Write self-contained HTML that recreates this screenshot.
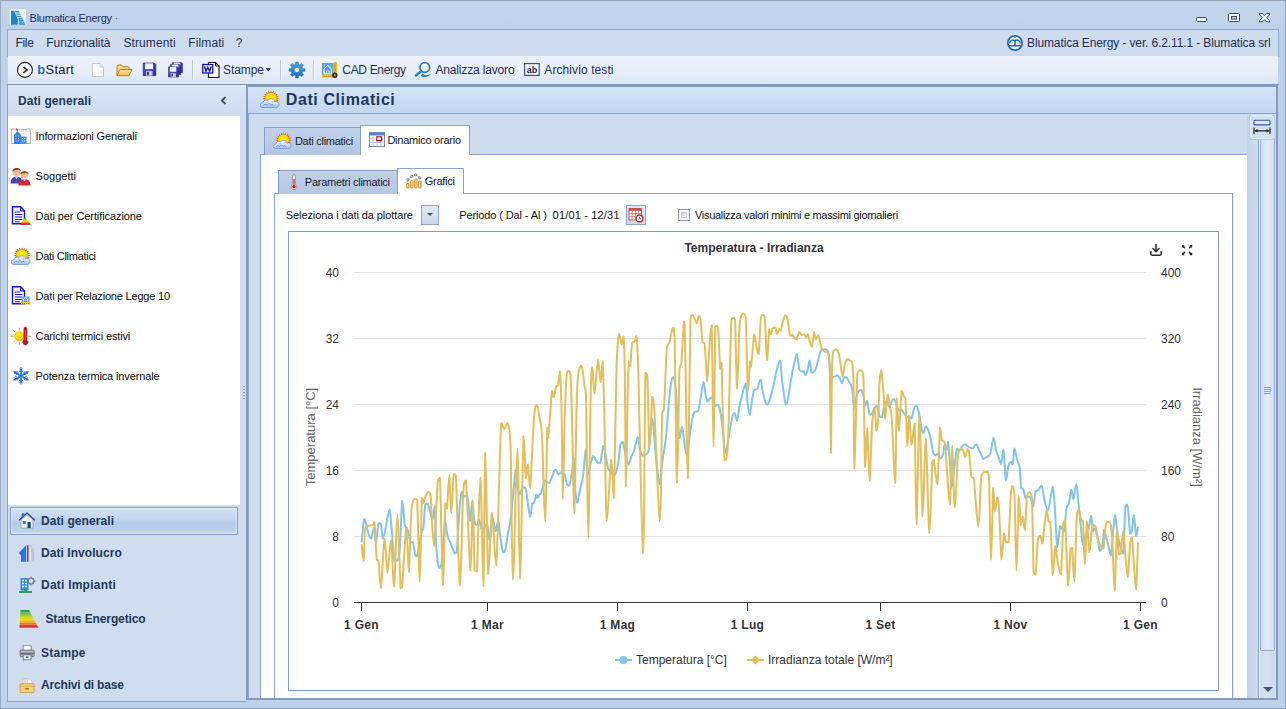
<!DOCTYPE html>
<html lang="it">
<head>
<meta charset="utf-8">
<title>Blumatica Energy</title>
<style>
*{box-sizing:border-box;margin:0;padding:0}
html,body{width:1286px;height:709px;overflow:hidden}
body{position:relative;background:#bfd1e9;font-family:"Liberation Sans",sans-serif;font-size:11px;color:#1e1e1e}
.abs{position:absolute}
.t{position:absolute;white-space:nowrap;line-height:1}
#win{left:0;top:0;width:1286px;height:709px;border:1px solid #98a9c6;border-top-color:#9ba4b3;background:linear-gradient(#c3d4eb,#bfd1e9 30px,#bfd1e9)}
#menubar{left:7px;top:29px;width:1272px;height:28px;border:1px solid #93a8c8;border-bottom:none;background:#cfdcee}
#toolbar{left:8px;top:56px;width:1270px;height:28px;background:linear-gradient(#ebf2fb,#e7eff9 55%,#d8e3f4)}
#tbline{left:7px;top:84px;width:1272px;height:1px;background:#8297ba}
.sep{position:absolute;top:60px;width:2px;height:20px;border-left:1px solid #bccbe2;border-right:1px solid #f6f9fd}
#lp{left:7px;top:85px;width:240px;height:617px;border:1px solid #8ea3c2;border-top:none;border-right:none;background:#d0ddef}
#lphead{left:8px;top:85px;width:238px;height:31px;background:linear-gradient(#dbe6f5,#cfdcee)}
#lplist{left:8px;top:116px;width:232px;height:389px;background:#fff}
#navsel{left:10px;top:507px;width:228px;height:28px;border:1px solid #819cc8;border-radius:1px;background:linear-gradient(#d2e1f4,#c3d6ee 42%,#b3cae8 58%,#c3d6ee);box-shadow:inset 0 0 0 1px rgba(255,255,255,.45)}
#rp{left:246px;top:85px;width:1032px;height:615px;border:2px solid #8299c0;background:#cfdcee;overflow:hidden}
#rphead{left:248px;top:87px;width:1028px;height:27px;background:linear-gradient(#d4e3f7,#c9dbf3 60%,#c4d7f0);border-bottom:1px solid #8ca3c8}
.tab{position:absolute;border:1px solid #829cc6;border-bottom:none;background:linear-gradient(#bfd0e8,#b3c7e2)}
.tabsel{position:absolute;border:1px solid #8aa5cc;border-bottom:none;background:#fff}
.page{position:absolute;border:1px solid #8aa5cc;background:#fff}
.btn{position:absolute;border:1px solid #8ea6c9;background:linear-gradient(#dfe9f6,#c9d8ec)}

</style>
</head>
<body>
<div id="win" class="abs"></div>
<div id="menubar" class="abs"></div>
<div id="toolbar" class="abs"></div>
<div id="tbline" class="abs"></div>
<div class="sep" style="left:192px"></div>
<div class="sep" style="left:280px"></div>
<div class="sep" style="left:313px"></div>
<div id="lp" class="abs"></div>
<div id="lphead" class="abs"></div>
<div id="lplist" class="abs"></div>
<div id="navsel" class="abs"></div>
<div class="abs" style="left:243px;top:386px;width:2px;height:14px;background:repeating-linear-gradient(#7f97bd 0 1px,transparent 1px 3px)"></div>
<div id="rp" class="abs"></div>
<div id="rphead" class="abs"></div>
<div class="abs" style="left:248px;top:114px;width:1px;height:584px;background:#93a9cb"></div>
<!-- outer tab control -->
<div class="abs" style="left:248px;top:115px;width:1028px;height:583px;overflow:hidden">
  <div class="page" style="left:12px;top:39px;width:988px;height:600px"></div>
  <div class="tab" style="left:16px;top:12px;width:97px;height:28px"></div>
  <div class="tabsel" style="left:112px;top:10px;width:110px;height:30px"></div>
  <div class="page" style="left:26px;top:78px;width:959px;height:560px;box-shadow:1px 0 0 #ece9e6"></div>
  <div class="tab" style="left:30px;top:55px;width:120px;height:24px"></div>
  <div class="tabsel" style="left:149px;top:53px;width:67px;height:26px"></div>
  <div class="btn" style="left:173px;top:90px;width:18px;height:20px"></div>
  <div class="abs" style="left:179px;top:98px;width:0;height:0;border:3px solid transparent;border-top:3px solid #555;border-bottom:none"></div>
  <div class="btn" style="left:378px;top:90px;width:20px;height:20px"></div>
  <div class="abs" style="left:430px;top:94px;width:12px;height:12px;border:1px solid #8f99a6;background:#f4f5f7"></div><div class="abs" style="left:433px;top:97px;width:6px;height:6px;border:1px solid #c4c8cf;background:linear-gradient(135deg,#d2d5da,#eef0f2)"></div>
  <div class="abs" style="left:40px;top:116px;width:931px;height:460px;border:1px solid #7f9ccb;background:#fff"></div>
  <!-- scroll strip -->
  <div class="abs" style="left:999px;top:0;width:12px;height:584px;background:linear-gradient(90deg,#c3d3e9,#cfdcee)"></div>
  <div class="abs" style="left:1010px;top:0;width:17px;height:584px;border-left:1px solid #8ba4c9;background:linear-gradient(90deg,#eef3fa 0 1px,#cddbee 1px,#d6e2f2 50%,#cad9ed)"></div>
  <div class="abs" style="left:1012px;top:22px;width:15px;height:514px;border:1px solid #93acd0;border-radius:2px;background:linear-gradient(90deg,#d0deef,#e0eaf6 50%,#d3e0f1)"></div>
  <div class="abs" style="left:1016px;top:272px;width:7px;height:7px;background:repeating-linear-gradient(#8ea6c8 0 1px,transparent 1px 2px)"></div>
  <div class="abs" style="left:1015px;top:572px;width:0;height:0;border:5px solid transparent;border-top:5px solid #4a5478;border-bottom:none"></div>
  <div class="abs" style="left:1002px;top:0px;width:24px;height:24px;border:1px solid #e6eef9;border-radius:3px;background:#d2dff1;box-shadow:0 0 0 1px #b9cae3"></div>
</div>

<svg class="abs" style="left:0;top:0" width="1286" height="709" viewBox="0 0 1286 709" font-family="Liberation Sans, sans-serif"><rect x="354" y="272" width="792" height="1" fill="#e4e4e4"/><rect x="354" y="338" width="792" height="1" fill="#e4e4e4"/><rect x="354" y="404" width="792" height="1" fill="#e4e4e4"/><rect x="354" y="470" width="792" height="1" fill="#e4e4e4"/><rect x="354" y="536" width="792" height="1" fill="#e4e4e4"/><path d="M361.6,542.3C362.0,538.4 363.4,522.0 364.1,518.9C364.8,518.9 365.3,521.3 366.0,523.8C366.7,526.3 367.7,531.2 368.5,533.7C369.3,536.2 370.1,538.6 371.0,538.6C371.9,537.6 373.4,527.5 374.2,527.5C375.0,528.3 375.2,543.6 375.9,543.6C376.6,542.9 377.6,526.6 378.4,523.3C379.2,523.3 380.2,523.3 380.9,523.8C381.6,526.3 382.0,538.0 382.8,538.6C383.6,538.6 384.7,532.4 385.8,527.5C386.9,522.6 388.5,509.5 389.5,509.5C390.5,510.5 391.2,525.1 392.0,533.7C392.8,542.3 393.4,556.6 394.4,560.9C395.4,560.9 397.2,560.9 398.1,559.6C399.1,556.7 399.4,553.5 400.1,543.6C400.8,533.7 401.5,503.5 402.3,500.4C403.1,500.4 404.0,520.4 404.8,525.1C405.6,528.8 406.4,525.9 407.3,528.8C408.2,531.7 409.6,540.0 410.5,542.3C411.4,542.3 412.2,542.3 413.0,542.3C413.8,544.5 414.7,553.0 415.4,555.4C416.1,556.4 416.2,556.4 417.2,556.4C418.2,552.4 420.6,535.8 421.6,531.2C422.6,528.8 422.7,531.2 423.3,528.8C423.9,524.3 424.6,508.3 425.3,504.1C426.1,503.6 427.0,503.6 427.8,503.6C428.6,505.0 429.4,510.2 430.2,512.7C431.0,515.2 431.9,518.9 432.7,518.9C433.4,517.9 434.1,506.5 434.7,506.5C435.3,511.4 435.7,538.3 436.4,548.5C437.1,558.7 438.1,565.1 438.9,567.8C439.7,567.8 440.4,567.8 441.4,564.6C442.4,556.9 444.1,526.1 445.1,521.4C446.1,521.4 446.5,532.3 447.5,536.2C448.5,540.1 450.0,541.9 451.2,544.8C452.4,547.7 454.0,552.3 454.9,553.5C455.8,553.5 455.9,553.5 456.7,552.2C457.5,544.0 459.0,514.2 459.9,504.1C460.8,494.0 461.2,492.9 461.9,491.7C462.6,491.7 463.2,496.1 464.1,496.7C465.0,496.7 466.3,495.4 467.3,495.4C468.3,499.4 469.4,519.9 470.2,520.9C471.0,520.9 471.4,501.6 472.2,501.6C472.9,502.0 473.9,519.4 474.7,523.3C475.5,525.1 476.5,525.1 477.2,525.1C477.9,524.6 478.4,520.1 479.1,520.1C479.8,520.7 480.7,527.6 481.6,528.8C482.5,528.8 483.7,528.3 484.6,527.5C485.5,526.7 486.1,523.8 487.0,523.8C487.9,526.1 488.9,541.1 489.8,541.1C490.7,540.1 491.5,519.4 492.5,517.7C493.5,517.7 494.8,530.7 495.7,531.2C496.6,531.2 497.3,520.9 498.1,520.9C498.9,522.1 499.8,533.4 500.6,538.6C501.4,543.8 502.4,550.2 503.1,552.2C503.9,552.2 504.3,552.2 505.1,550.5C505.9,547.4 507.0,539.4 508.0,533.7C509.0,528.0 510.0,524.8 511.0,516.4C512.0,508.0 513.4,490.9 514.2,483.1C515.0,475.3 515.1,469.5 515.9,469.5C516.7,471.4 518.0,491.7 519.1,494.7C520.2,494.7 521.7,488.3 522.8,487.3C523.9,487.3 524.9,487.3 525.8,488.8C526.7,492.0 527.6,501.8 528.3,506.5C529.0,511.2 529.6,516.9 530.2,516.9C530.9,516.4 531.6,506.0 532.2,503.6C532.8,502.8 533.3,503.6 534.0,502.8C534.7,501.3 535.8,495.5 536.4,494.7C537.0,494.7 537.2,497.9 537.7,497.9C538.2,497.9 538.8,495.7 539.4,494.7C540.0,493.7 540.4,494.0 541.4,491.7C542.4,489.4 544.1,482.2 545.1,480.6C546.1,480.6 546.8,481.9 547.5,482.3C548.2,482.7 548.7,483.1 549.5,483.1C550.3,482.0 551.5,478.0 552.5,475.7C553.5,473.4 554.4,469.7 555.4,469.5C556.4,469.5 557.6,473.9 558.6,474.4C559.6,474.4 560.2,472.6 561.1,472.5C562.0,472.5 563.3,472.5 564.3,474.0C565.3,476.1 566.5,482.9 567.3,484.8C568.1,485.6 568.5,485.6 569.3,485.6C570.1,483.2 571.5,475.4 572.2,470.7C572.9,466.0 573.0,457.2 573.5,457.2C574.0,460.1 574.6,480.4 575.2,488.0C575.8,495.6 576.5,502.2 577.2,502.8C577.9,502.8 578.6,496.4 579.6,491.7C580.6,487.0 582.3,481.5 583.3,474.4C584.3,467.3 585.0,449.3 585.8,449.3C586.5,449.3 587.0,472.1 587.8,474.4C588.6,474.4 589.8,466.4 590.7,463.3C591.6,460.2 592.4,456.5 593.2,455.9C594.0,455.9 594.9,458.4 595.7,459.6C596.5,460.8 597.3,462.9 598.1,463.3C598.9,463.3 599.8,463.3 600.6,462.1C601.4,459.2 602.3,447.2 603.1,446.0C603.9,446.0 604.8,451.0 605.6,454.7C606.4,458.4 607.2,465.6 608.0,468.3C608.8,470.7 609.5,469.5 610.5,470.7C611.5,471.9 613.0,475.7 614.2,475.7C615.4,474.7 616.9,469.8 617.9,464.6C618.9,459.5 619.6,448.6 620.4,444.8C621.2,441.9 622.0,441.9 622.8,441.9C623.6,443.3 624.3,449.7 625.3,453.5C626.2,457.3 627.5,464.2 628.5,464.6C629.5,464.6 630.6,458.2 631.5,455.9C632.4,453.6 633.0,454.2 634.0,451.0C635.0,447.8 636.7,437.1 637.7,436.9C638.7,436.9 639.3,446.7 640.1,449.8C640.9,452.9 641.5,454.7 642.5,455.4C643.5,455.4 645.2,455.0 646.2,454.2C647.2,453.4 647.7,454.2 648.6,450.5C649.5,444.5 651.1,422.1 651.9,418.4C652.7,418.4 652.9,421.7 653.6,428.3C654.3,434.9 655.0,448.6 656.0,457.9C657.0,467.2 658.8,483.5 659.8,484.3C660.8,484.3 661.2,470.5 662.2,462.8C663.2,455.1 664.9,447.2 665.9,438.1C666.9,429.1 667.6,417.6 668.4,408.5C669.2,399.4 670.1,389.1 670.9,383.8C671.7,378.5 672.5,376.9 673.3,376.9C674.1,377.7 675.1,381.9 675.8,388.8C676.5,395.7 676.9,410.2 677.5,418.4C678.1,426.6 678.8,436.7 679.5,438.1C680.2,438.1 681.2,427.0 682.0,427.0C682.8,427.8 683.6,438.4 684.4,443.1C685.2,447.8 686.1,455.4 686.9,455.4C687.7,454.6 688.6,443.9 689.4,438.1C690.2,432.4 691.1,425.2 691.9,420.9C692.7,416.6 693.3,413.8 694.3,412.2C695.3,411.0 697.0,412.2 698.0,411.0C699.0,408.7 699.6,403.5 700.5,398.6C701.4,393.8 702.7,382.7 703.5,381.9C704.3,381.9 704.8,390.4 705.4,393.7C706.0,397.0 706.6,400.8 707.4,401.6C708.1,401.6 709.1,399.3 709.9,398.6C710.7,397.9 711.5,397.4 712.3,397.4C713.1,398.6 713.9,404.8 714.8,406.0C715.7,406.0 716.9,404.8 717.8,404.8C718.7,405.6 719.4,407.1 720.2,411.0C721.0,414.9 721.9,421.3 722.7,428.3C723.5,435.3 724.4,450.5 725.2,453.0C726.0,453.0 726.9,447.2 727.7,443.1C728.5,439.0 729.3,432.8 730.1,428.3C730.9,423.8 731.9,418.4 732.6,415.9C733.4,413.3 733.9,413.0 734.6,413.0C735.3,413.8 736.2,420.9 737.0,420.9C737.8,419.7 738.6,410.5 739.5,406.0C740.4,401.5 741.5,397.4 742.5,393.7C743.5,390.0 744.8,383.8 745.7,383.8C746.6,385.9 747.2,400.9 747.9,406.0C748.6,411.1 749.2,414.7 749.9,414.7C750.6,413.5 751.6,402.7 752.3,398.6C753.0,394.5 753.5,391.6 754.3,390.0C755.1,388.8 756.3,390.0 757.3,388.8C758.3,387.0 759.6,379.4 760.5,379.4C761.4,379.8 761.9,387.6 762.7,391.2C763.5,394.8 764.5,398.8 765.2,401.1C766.0,403.4 766.5,404.8 767.2,404.8C767.9,404.6 768.6,403.0 769.6,399.9C770.6,396.8 772.1,391.4 773.3,386.3C774.5,381.2 775.9,373.3 777.0,369.0C778.1,364.7 779.1,360.4 780.0,360.4C780.9,362.9 781.5,376.4 782.5,383.8C783.5,391.2 784.8,402.3 785.7,404.8C786.6,404.8 787.2,402.9 788.1,398.6C789.0,394.3 790.1,384.9 791.1,378.9C792.1,372.9 793.3,366.9 794.3,362.8C795.2,358.7 796.0,354.2 796.8,354.2C797.6,355.2 798.5,366.1 799.3,369.0C800.1,371.5 801.0,371.2 801.7,371.5C802.4,371.5 802.9,371.0 803.5,371.0C804.1,371.6 804.7,375.2 805.4,375.2C806.1,374.9 807.2,371.5 807.9,369.0C808.6,366.5 809.0,360.4 809.6,360.4C810.2,361.0 810.9,370.8 811.6,372.7C812.4,372.7 813.3,372.5 814.1,371.5C814.9,370.5 815.7,369.0 816.5,366.5C817.3,364.0 818.2,359.4 819.0,356.7C819.8,354.0 820.0,351.7 821.0,350.5C822.0,349.3 823.5,349.3 824.7,349.3C825.9,349.5 827.3,349.3 828.1,351.7C828.9,354.2 829.1,360.2 829.6,364.1C830.1,368.0 830.2,373.1 830.9,375.2C831.6,376.9 832.7,376.9 833.8,376.9C834.9,376.9 836.5,375.2 837.5,375.2C838.5,375.5 839.2,377.5 840.0,378.9C840.8,380.2 841.3,383.3 842.0,383.3C842.7,383.0 843.6,377.8 844.4,376.9C845.2,376.9 846.1,376.9 846.9,377.7C847.7,378.6 848.7,381.4 849.4,382.6C850.1,383.8 850.5,383.2 851.1,385.1C851.7,387.0 852.3,389.8 852.8,393.7C853.3,397.6 853.8,407.7 854.3,408.5C854.8,408.5 855.3,401.5 856.0,398.6C856.7,395.7 857.7,392.6 858.5,391.2C859.3,390.0 860.2,390.0 861.0,390.0C861.8,390.8 862.8,393.5 863.5,396.2C864.2,398.9 864.6,405.2 865.2,406.0C865.8,406.0 866.5,401.1 867.2,401.1C867.9,402.6 868.8,412.6 869.6,414.7C870.4,414.7 871.3,414.6 872.1,413.5C872.9,412.4 873.8,409.2 874.6,408.0C875.4,406.8 876.2,406.0 877.0,406.0C877.8,407.3 878.7,414.0 879.5,415.9C880.3,417.2 881.2,417.2 882.0,417.2C882.8,415.4 883.6,407.5 884.4,404.8C885.2,402.1 886.1,401.1 886.9,401.1C887.7,401.5 888.6,407.3 889.4,407.3C890.2,407.3 891.1,402.5 891.9,401.1C892.7,399.7 893.5,399.1 894.3,399.1C895.1,399.9 896.0,404.0 896.8,406.0C897.6,408.0 898.5,410.4 899.3,411.0C900.1,411.0 900.9,409.8 901.7,409.8C902.5,410.2 903.4,412.3 904.2,413.5C905.0,414.7 905.9,416.7 906.7,417.2C907.5,417.2 908.3,416.4 909.1,416.4C909.9,416.6 910.8,418.4 911.6,418.4C912.4,417.1 913.3,410.6 914.1,408.5C914.9,406.4 915.7,405.6 916.5,405.6C917.3,406.4 918.2,409.7 919.0,413.5C919.8,417.3 920.8,424.9 921.5,428.3C922.2,431.7 922.5,433.6 923.2,433.6C923.9,433.2 924.9,426.8 925.7,426.2C926.5,426.2 927.3,427.8 928.1,429.9C928.9,432.0 929.8,434.9 930.6,438.6C931.4,442.3 932.3,449.4 933.1,452.2C933.9,454.9 934.8,454.8 935.6,455.1C936.4,455.1 937.2,454.1 938.0,454.1C938.8,454.6 939.7,458.2 940.5,458.3C941.3,458.3 942.3,456.9 943.0,454.6C943.7,452.4 944.1,445.6 944.7,444.8C945.3,444.8 946.2,449.7 946.7,449.7C947.2,449.2 947.4,441.8 947.9,441.8C948.4,443.9 949.3,454.3 949.9,462.0C950.5,469.7 950.9,486.8 951.6,488.0C952.3,488.0 953.2,476.0 954.1,469.4C955.0,462.8 956.2,451.6 957.0,448.5C957.8,448.5 958.2,450.9 959.0,450.9C959.8,450.7 960.5,448.3 961.5,447.2C962.5,446.1 964.0,444.3 965.2,444.3C966.4,444.3 967.7,446.5 968.9,447.2C970.1,447.9 971.4,448.5 972.6,448.5C973.8,448.0 975.3,444.3 976.3,444.3C977.3,444.5 978.0,448.0 978.8,449.7C979.6,451.4 980.5,453.0 981.2,454.6C981.9,456.2 982.4,458.7 983.2,459.1C984.0,459.1 985.1,457.8 986.2,457.1C987.3,456.4 988.7,457.1 989.9,455.1C991.1,451.9 992.6,438.7 993.6,437.8C994.6,437.8 995.2,446.5 996.0,449.7C996.8,452.9 997.7,454.7 998.5,457.1C999.3,459.5 1000.2,464.0 1001.0,464.0C1001.8,462.8 1002.7,449.7 1003.5,449.7C1004.3,452.5 1005.1,477.9 1005.9,480.6C1006.7,480.6 1007.6,468.8 1008.4,465.7C1009.2,462.6 1010.2,462.2 1010.9,462.0C1011.6,462.0 1012.0,464.5 1012.6,464.5C1013.2,462.2 1013.9,449.3 1014.6,448.5C1015.3,448.5 1016.2,456.5 1017.0,459.6C1017.8,462.7 1018.8,462.3 1019.5,467.0C1020.2,471.7 1020.6,484.3 1021.2,488.0C1021.8,489.2 1022.5,488.0 1023.2,489.2C1024.0,491.0 1025.0,497.4 1025.7,498.6C1026.5,498.6 1026.9,496.7 1027.7,496.6C1028.5,496.6 1029.7,496.6 1030.6,497.8C1031.5,499.4 1032.3,506.5 1033.1,506.5C1033.9,505.4 1034.8,493.9 1035.6,491.2C1036.4,490.4 1037.0,491.2 1038.0,490.4C1039.0,489.4 1040.7,485.5 1041.7,485.5C1042.7,486.9 1043.2,495.0 1044.2,499.1C1045.2,503.2 1046.9,510.2 1047.9,510.2C1048.9,510.2 1049.6,503.0 1050.4,499.1C1051.2,495.2 1052.1,486.7 1052.8,486.7C1053.5,487.9 1054.0,496.4 1054.8,506.5C1055.5,516.6 1056.4,543.9 1057.3,547.2C1058.2,547.2 1059.1,528.9 1060.2,526.2C1061.3,526.2 1063.0,531.2 1064.0,531.2C1065.0,528.3 1065.6,513.6 1066.4,509.0C1067.2,504.4 1068.1,506.7 1068.9,503.5C1069.7,500.3 1070.7,490.4 1071.4,489.7C1072.1,489.7 1072.5,499.1 1073.3,499.1C1074.1,498.2 1075.5,484.3 1076.3,484.3C1077.1,484.7 1077.6,494.9 1078.3,501.5C1079.0,508.1 1079.7,516.6 1080.5,523.8C1081.3,531.0 1082.0,543.2 1083.0,544.8C1084.0,544.8 1085.3,536.3 1086.2,533.6C1087.1,530.9 1087.8,531.7 1088.6,528.7C1089.4,525.8 1090.4,515.9 1091.1,515.9C1091.8,516.3 1092.2,529.2 1092.8,531.2C1093.4,531.2 1094.0,528.2 1094.8,528.2C1095.5,529.2 1096.5,533.5 1097.3,537.3C1098.1,541.1 1099.0,549.4 1099.8,550.9C1100.6,550.9 1101.5,549.5 1102.2,546.0C1102.9,542.5 1103.6,531.5 1104.2,529.9C1104.8,529.9 1105.2,533.4 1105.9,536.1C1106.6,538.8 1107.6,542.8 1108.4,546.0C1109.2,549.2 1110.1,555.4 1110.9,555.4C1111.7,552.5 1112.6,535.4 1113.3,528.7C1114.0,522.0 1114.5,515.1 1115.1,515.1C1115.7,515.1 1116.3,524.4 1117.0,528.7C1117.7,533.0 1118.0,536.9 1119.0,541.0C1120.0,545.1 1122.2,553.4 1123.2,553.4C1124.2,548.1 1124.6,517.1 1125.2,509.0C1125.8,504.5 1126.4,504.5 1126.9,504.5C1127.4,504.5 1127.6,504.5 1128.1,509.0C1128.6,513.9 1129.5,529.9 1130.1,533.6C1130.7,533.6 1131.3,533.6 1131.9,531.2C1132.5,528.1 1133.1,515.1 1133.8,515.1C1134.5,515.9 1135.6,534.2 1136.3,536.1C1137.0,536.1 1137.7,528.3 1138.0,526.7" fill="none" stroke="#82c4ea" stroke-width="2" stroke-linejoin="round"/><path d="M361.6,544.1C361.9,546.9 362.9,560.9 363.6,560.9C364.3,558.0 364.1,532.8 365.6,526.8C367.1,525.1 371.2,525.9 372.7,525.1C374.2,524.3 373.7,521.9 374.4,521.9C375.1,527.5 376.0,552.3 376.7,558.9C377.4,561.4 377.9,558.9 378.6,561.4C379.3,566.2 379.9,588.0 380.9,588.0C381.9,584.2 383.5,541.1 384.6,538.6C385.7,538.6 386.4,572.5 387.5,572.7C388.6,572.7 389.9,539.9 391.0,539.9C392.1,542.2 392.9,586.8 394.0,586.8C395.1,582.5 396.3,514.4 397.4,514.4C398.5,514.6 399.8,575.8 400.6,588.0C401.4,588.0 401.2,588.0 402.1,587.5C403.1,577.5 405.2,530.9 406.3,528.3C407.4,528.3 407.9,572.0 408.8,572.0C409.7,568.8 410.5,521.2 411.5,509.0C412.5,498.6 413.9,500.0 414.9,498.6C415.8,498.6 416.4,498.6 417.2,500.4C418.0,514.3 418.8,581.9 419.6,581.9C420.4,581.5 421.3,511.0 421.9,497.9C422.5,497.9 422.7,503.3 423.3,503.3C423.9,503.0 424.7,498.1 425.6,496.2C426.5,494.3 427.7,491.9 428.5,491.7C429.3,491.7 429.6,491.7 430.5,494.7C431.4,503.8 432.8,546.0 434.0,546.0C435.2,543.7 436.7,492.4 437.7,481.1C438.7,478.1 439.0,478.1 439.9,478.1C440.8,495.4 442.2,580.9 443.1,585.1C444.0,585.1 444.7,516.1 445.3,503.3C445.9,503.3 446.3,508.5 447.0,508.5C447.7,503.8 448.6,475.2 449.3,475.2C450.0,475.9 450.5,512.7 451.2,512.7C451.9,512.5 452.9,480.2 453.7,474.0C454.5,474.0 454.9,474.0 455.9,475.7C456.9,494.3 458.7,582.4 459.9,585.6C461.1,585.6 462.1,512.2 463.1,494.7C464.1,480.6 464.8,480.6 466.0,480.6C467.2,493.3 469.4,567.5 470.5,570.7C471.6,570.7 472.0,499.9 472.7,499.9C473.4,499.9 474.0,558.8 474.7,570.7C475.4,571.5 475.9,571.5 476.9,571.5C477.8,556.0 479.3,477.7 480.4,477.7C481.5,480.2 482.5,586.3 483.3,586.3C484.1,582.1 484.5,454.7 485.3,452.7C486.1,452.7 487.2,564.4 488.3,574.4C489.4,574.4 490.7,514.2 492.0,512.7C493.3,512.7 494.7,565.3 496.2,565.3C497.7,550.3 499.8,445.7 501.1,423.0C502.5,423.0 503.3,429.2 504.3,429.2C505.3,429.2 506.3,423.0 507.3,423.0C508.3,425.6 509.6,423.0 510.5,444.8C511.4,470.9 511.9,578.8 513.0,579.4C514.1,579.4 516.2,448.6 517.4,448.5C518.5,448.5 518.9,578.9 519.9,578.9C520.9,576.9 522.6,453.0 523.6,436.2C524.6,436.2 525.1,473.4 525.8,478.1C526.5,478.1 527.1,464.6 527.8,464.6C528.5,466.2 529.2,488.0 530.2,488.0C531.2,480.2 532.9,431.9 534.0,418.1C535.1,405.0 536.0,405.0 536.9,405.0C537.8,405.0 538.7,412.6 539.6,418.1C540.5,423.6 541.2,420.7 542.1,437.8C543.0,454.9 544.2,520.9 545.1,520.9C546.0,519.2 546.8,441.4 547.3,427.5C547.8,427.5 547.5,437.8 548.3,437.8C549.1,431.7 551.1,397.7 552.0,390.9C552.9,390.9 553.0,397.1 553.7,397.1C554.4,396.4 555.5,388.6 556.2,386.5C556.9,384.8 557.5,386.5 558.1,384.8C558.7,382.2 559.3,371.2 559.9,371.2C560.5,375.9 561.1,391.8 561.6,413.1C562.1,434.4 562.3,499.1 562.8,499.1C563.3,499.1 564.1,434.0 564.8,413.1C565.5,392.2 566.2,380.7 566.8,373.6C567.4,370.7 567.9,370.7 568.5,370.7C569.1,370.9 569.9,370.7 570.5,374.9C571.1,384.0 571.6,402.4 572.2,425.5C572.8,448.6 573.5,513.5 574.2,513.5C575.0,509.8 576.0,426.6 576.7,403.3C577.4,380.0 577.7,379.9 578.4,373.6C579.1,367.3 580.2,366.3 580.9,365.7C581.6,365.7 582.0,366.5 582.6,369.9C583.2,373.3 584.0,381.7 584.6,386.0C585.2,390.3 585.4,386.0 586.0,395.9C586.6,421.1 587.5,537.4 588.3,537.4C589.1,537.0 590.0,421.7 590.7,393.4C591.4,367.5 591.9,367.5 592.5,367.5C593.1,367.5 593.5,393.4 594.4,393.4C595.3,392.2 597.1,362.0 598.1,360.1C599.1,360.1 599.9,382.1 600.6,382.3C601.4,382.3 602.0,361.3 602.6,361.3C603.2,366.4 603.6,386.5 604.3,413.1C605.0,439.7 605.6,513.1 606.8,520.9C607.9,520.9 610.1,463.4 611.2,459.6C612.4,459.6 612.8,497.9 613.7,497.9C614.6,481.9 615.8,391.1 616.7,363.8C617.6,336.5 618.3,337.3 619.1,334.1C619.9,334.1 620.9,344.1 621.6,344.5C622.4,344.5 623.1,336.6 623.6,336.6C624.1,341.9 624.4,351.1 624.8,376.1C625.2,401.1 625.5,484.7 626.0,486.8C626.5,486.8 627.3,409.4 627.8,388.5C628.3,367.6 628.6,365.0 629.0,361.3C629.4,361.3 629.7,366.2 630.2,366.2C630.7,363.1 631.5,346.9 632.2,342.8C633.0,341.5 634.0,342.6 634.7,341.5C635.4,340.4 635.8,335.9 636.4,335.9C637.0,339.6 637.0,335.9 638.1,363.8C639.2,400.1 641.9,552.0 643.1,553.5C644.3,553.5 644.7,402.2 645.4,372.7C646.1,372.7 646.7,372.7 647.4,376.4C648.1,388.9 648.6,444.6 649.4,448.0C650.2,448.0 651.5,403.3 652.3,396.7C653.1,396.7 653.0,396.7 654.3,408.5C655.5,429.2 658.5,520.1 659.8,520.9C661.1,520.9 661.5,432.2 662.2,413.5C662.9,408.5 663.2,413.5 664.0,408.5C664.8,397.8 665.8,360.4 666.7,349.3C667.6,341.9 668.8,344.8 669.6,341.9C670.4,339.0 671.0,334.4 671.6,332.0C672.2,329.6 672.8,327.5 673.3,327.5C673.8,328.3 674.0,327.5 674.6,336.9C675.2,362.8 676.2,477.2 677.0,482.6C677.8,482.6 678.8,389.2 679.5,369.0C680.2,361.6 680.8,369.0 681.5,361.6C682.2,353.7 683.4,323.7 684.0,321.6C684.6,321.6 684.6,323.1 685.2,349.3C685.8,375.5 686.8,478.6 687.7,478.6C688.6,473.2 689.8,344.5 690.6,317.2C691.4,314.7 691.6,314.7 692.3,314.7C693.0,315.0 694.0,317.7 694.8,319.1C695.5,320.5 696.1,323.3 696.8,323.3C697.5,322.8 698.2,316.5 698.8,315.9C699.4,315.9 699.9,315.9 700.5,319.6C701.1,323.9 701.8,337.9 702.5,341.9C703.2,343.8 703.9,341.9 704.7,343.8C705.5,350.4 706.5,380.1 707.2,381.4C707.9,381.4 708.4,361.0 709.1,351.7C709.8,342.4 710.9,325.3 711.6,325.3C712.4,341.2 713.0,446.5 713.6,446.8C714.2,446.8 714.7,347.2 715.3,327.0C715.9,325.8 716.8,325.8 717.3,325.8C717.8,327.0 718.0,327.2 718.5,334.4C719.0,341.6 719.7,364.3 720.2,369.0C720.7,369.0 721.1,362.8 721.5,362.8C721.9,369.4 722.2,392.2 722.7,408.5C723.2,424.8 723.9,453.8 724.7,460.4C725.5,460.4 726.8,460.4 727.7,448.0C728.6,431.9 729.5,385.5 730.1,364.1C730.7,342.7 730.9,327.3 731.4,319.6C731.9,317.7 732.7,317.7 733.3,317.7C733.9,317.7 734.5,317.7 735.1,319.6C735.7,331.5 736.3,387.6 737.0,388.8C737.7,388.8 738.7,339.4 739.5,327.0C740.3,314.7 741.0,316.9 741.7,314.7C742.4,313.5 743.0,313.5 743.7,313.5C744.4,313.9 745.0,313.5 745.7,317.2C746.4,330.1 747.2,383.8 747.9,391.2C748.6,391.2 749.4,365.7 749.9,361.6C750.4,361.6 750.4,366.5 751.1,366.5C751.8,362.0 753.3,338.1 754.1,334.4C754.9,334.4 755.3,341.0 756.0,344.3C756.7,347.6 757.7,354.2 758.5,354.2C759.3,349.7 760.2,323.8 761.0,317.2C761.8,314.7 762.4,314.7 763.0,314.7C763.6,314.7 764.0,314.7 764.7,317.2C765.4,324.8 766.5,358.3 767.2,360.4C767.9,360.4 768.5,333.8 769.1,329.5C769.7,329.5 770.3,334.4 770.9,334.4C771.5,334.2 771.9,329.4 772.6,328.3C773.3,327.5 774.6,327.5 775.3,327.5C776.0,328.4 776.4,333.8 777.0,334.0C777.6,334.0 778.4,329.6 779.0,329.0C779.6,329.0 780.1,330.7 780.7,330.7C781.3,329.6 782.0,324.7 782.7,322.1C783.5,319.6 784.4,316.0 785.2,315.4C786.0,315.4 786.6,315.4 787.4,318.4C788.2,321.8 789.2,332.9 790.1,335.7C791.0,335.7 791.8,334.9 792.6,334.9C793.4,335.4 794.4,338.1 795.1,338.9C795.8,339.4 796.1,339.4 796.8,339.4C797.5,338.2 798.5,332.8 799.3,332.0C800.1,332.0 800.9,334.5 801.7,334.9C802.5,334.9 803.5,334.4 804.2,334.4C804.9,334.8 805.3,337.4 805.9,337.4C806.5,337.4 807.1,334.4 807.9,334.4C808.6,335.5 809.7,341.7 810.4,343.8C811.1,345.9 811.5,346.8 812.1,346.8C812.7,344.8 813.5,333.2 814.1,332.0C814.7,332.0 815.1,338.9 815.8,339.4C816.5,339.4 817.6,335.2 818.3,335.2C819.0,335.8 819.6,340.7 820.2,343.1C820.9,345.5 821.4,348.4 822.2,349.8C823.0,351.2 824.1,350.9 825.2,351.7C826.3,352.5 828.1,351.7 828.9,354.7C829.7,360.9 829.8,372.4 830.1,388.8C830.4,405.2 830.6,453.0 830.9,453.0C831.2,448.9 831.6,381.2 832.1,364.1C832.6,350.5 833.0,353.0 833.8,350.5C834.6,349.3 836.0,349.3 836.8,349.3C837.6,349.7 838.2,350.5 838.8,353.0C839.4,355.5 839.9,360.2 840.5,364.1C841.1,368.0 841.8,376.4 842.5,376.4C843.2,376.4 844.1,367.0 844.9,364.1C845.7,361.2 846.6,359.7 847.4,359.1C848.2,359.1 849.1,359.8 849.9,360.4C850.7,361.0 851.7,360.4 852.3,362.8C852.9,367.5 853.3,371.1 853.6,388.8C853.9,406.5 853.7,469.0 854.3,469.0C854.9,466.5 856.4,390.5 857.3,374.0C858.2,370.2 859.0,370.6 859.8,370.2C860.6,370.2 861.6,370.2 862.2,371.5C862.8,372.9 863.0,371.5 863.5,378.9C864.0,394.8 864.6,458.8 865.2,467.0C865.8,467.0 866.5,428.3 867.2,428.3C867.9,430.7 868.8,481.1 869.6,481.1C870.4,480.3 871.3,435.4 872.1,423.3C872.9,411.2 873.9,408.5 874.6,408.5C875.3,409.7 875.9,429.1 876.5,430.7C877.1,430.7 877.8,426.2 878.3,418.4C878.8,410.6 879.0,391.8 879.5,383.8C880.0,375.8 880.6,370.2 881.2,370.2C881.8,371.0 882.5,380.8 883.2,388.8C883.9,396.8 884.5,417.4 885.2,418.4C886.0,418.4 886.9,397.0 887.7,394.9C888.5,394.9 889.2,401.7 889.9,406.0C890.6,410.3 891.0,408.0 891.9,420.9C892.8,433.8 894.3,483.1 895.1,483.1C895.9,479.4 896.2,407.3 896.8,398.6C897.4,398.6 898.0,430.7 898.8,430.7C899.6,429.4 900.9,396.4 901.7,390.7C902.5,390.7 903.1,394.9 903.7,396.2C904.3,397.5 904.8,396.2 905.4,398.6C906.0,406.9 906.8,443.1 907.4,446.0C908.0,446.0 908.4,416.1 909.1,415.9C909.8,415.9 910.7,443.6 911.6,444.8C912.5,444.8 913.8,423.3 914.6,423.3C915.4,436.6 915.7,524.5 916.5,524.5C917.3,523.1 918.5,416.5 919.5,415.1C920.5,415.1 921.7,512.5 922.7,516.4C923.7,516.4 924.6,438.6 925.7,438.6C926.8,441.4 928.3,529.0 929.4,532.9C930.5,532.9 931.6,474.2 932.3,462.0C933.0,459.6 933.0,459.6 933.8,459.6C934.6,463.3 936.3,484.3 937.3,484.3C938.3,478.9 939.3,434.9 940.0,427.5C940.7,427.5 940.9,437.3 941.7,439.8C942.5,442.3 943.9,439.8 944.7,442.3C945.5,446.8 945.8,456.6 946.7,467.0C947.6,477.4 949.0,504.5 949.9,504.5C950.8,501.0 951.3,446.0 952.1,446.0C952.9,446.4 953.8,505.3 954.8,507.2C955.8,507.2 956.9,466.7 957.8,457.1C958.7,449.7 959.4,451.0 960.2,449.7C961.0,449.2 961.9,449.2 962.7,449.2C963.5,450.4 964.5,457.1 965.2,457.1C966.0,457.1 966.6,450.0 967.2,449.0C967.8,449.0 968.2,449.0 968.9,450.9C969.6,455.5 970.6,472.4 971.4,476.9C972.2,478.1 972.6,476.9 973.8,478.1C974.9,486.5 977.1,527.0 978.3,527.0C979.5,526.8 980.1,486.1 981.2,476.9C982.3,471.9 983.8,472.7 984.9,471.9C986.0,471.9 987.2,471.9 987.9,471.9C988.6,473.5 988.6,471.9 989.1,481.8C989.6,496.4 990.4,558.6 991.1,559.6C991.8,559.6 992.5,496.0 993.1,488.0C993.7,488.0 994.1,509.8 994.8,511.4C995.5,511.4 996.6,498.2 997.3,497.8C998.0,497.8 998.3,498.7 999.0,509.0C999.7,519.3 1000.7,555.5 1001.5,559.6C1002.3,559.6 1003.3,536.5 1004.0,533.6C1004.7,533.6 1005.2,540.8 1005.9,542.3C1006.6,542.3 1007.6,542.3 1008.4,542.3C1009.2,534.3 1010.2,503.5 1010.9,494.1C1011.6,486.0 1012.2,486.0 1012.8,486.0C1013.4,486.4 1014.0,486.0 1014.6,496.6C1015.2,510.7 1015.8,570.7 1016.5,570.7C1017.2,570.7 1018.1,504.2 1018.8,496.6C1019.5,496.6 1020.1,521.7 1020.7,525.0C1021.4,525.0 1022.0,516.4 1022.7,516.4C1023.4,517.2 1024.2,529.9 1024.9,529.9C1025.6,526.6 1026.2,502.9 1026.9,496.6C1027.7,492.2 1028.6,492.2 1029.4,492.2C1030.2,492.4 1031.2,492.2 1031.9,497.8C1032.6,511.1 1033.0,559.1 1033.6,571.9C1034.2,574.4 1034.9,574.4 1035.6,574.4C1036.3,568.9 1037.2,545.0 1038.0,538.6C1038.8,536.1 1039.8,536.1 1040.5,536.1C1041.2,536.9 1041.8,543.5 1042.5,543.5C1043.2,541.0 1044.2,526.8 1044.9,521.3C1045.6,515.8 1046.1,510.2 1046.7,510.2C1047.3,510.2 1048.0,519.2 1048.6,521.3C1049.2,522.5 1049.7,521.3 1050.4,522.5C1051.1,531.5 1052.0,571.2 1052.8,575.1C1053.6,575.1 1054.5,548.0 1055.3,546.0C1056.1,546.0 1056.8,558.6 1057.8,563.3C1058.8,568.0 1060.1,574.4 1061.0,574.4C1061.9,567.8 1062.5,532.7 1063.2,523.8C1063.9,520.8 1064.4,520.8 1065.2,520.8C1066.0,531.1 1067.2,580.9 1068.1,585.5C1069.0,585.5 1069.9,554.8 1070.6,548.5C1071.3,547.7 1071.5,547.7 1072.1,547.7C1072.7,553.1 1073.5,581.0 1074.3,581.0C1075.1,575.8 1076.0,528.3 1076.8,516.4C1077.5,509.7 1078.1,509.7 1078.8,509.7C1079.5,510.3 1080.5,518.2 1081.2,520.1C1081.9,521.3 1082.4,520.1 1083.0,521.3C1083.6,528.7 1084.2,564.5 1084.9,564.5C1085.6,564.5 1086.2,523.3 1086.9,521.3C1087.7,521.3 1088.6,551.0 1089.4,552.2C1090.2,552.2 1091.2,533.2 1091.9,528.7C1092.6,525.0 1092.9,525.0 1093.6,525.0C1094.3,525.0 1095.2,526.0 1096.0,528.7C1096.8,531.4 1097.7,537.9 1098.5,541.0C1099.3,544.1 1100.2,546.0 1101.0,547.2C1101.8,548.5 1102.7,548.5 1103.5,548.5C1104.3,544.6 1105.1,528.2 1105.9,523.8C1106.7,521.8 1107.6,521.8 1108.4,521.8C1109.2,522.0 1110.2,521.8 1110.9,525.0C1111.6,529.0 1112.0,535.0 1112.6,546.0C1113.2,557.0 1113.9,590.9 1114.6,590.9C1115.3,588.4 1116.3,537.2 1117.0,531.2C1117.7,531.2 1118.4,550.9 1119.0,554.6C1119.6,554.6 1120.0,554.6 1120.7,553.4C1121.4,549.5 1122.5,531.2 1123.2,531.2C1124.0,531.2 1124.5,545.8 1125.2,553.4C1126.0,561.0 1126.9,576.9 1127.7,576.9C1128.5,575.2 1129.4,550.1 1130.1,543.5C1130.8,537.3 1131.3,537.3 1131.9,537.3C1132.5,540.6 1133.1,554.6 1133.8,563.3C1134.5,571.9 1135.3,589.2 1136.0,589.2C1136.7,585.7 1137.7,550.1 1138.0,542.3" fill="none" stroke="#e3bf5c" stroke-width="2" stroke-linejoin="round"/><rect x="354" y="602" width="792" height="1" fill="#333"/><rect x="361" y="602" width="1" height="9" fill="#333"/><rect x="487" y="602" width="1" height="9" fill="#333"/><rect x="617" y="602" width="1" height="9" fill="#333"/><rect x="747" y="602" width="1" height="9" fill="#333"/><rect x="880" y="602" width="1" height="9" fill="#333"/><rect x="1010" y="602" width="1" height="9" fill="#333"/><rect x="1140" y="602" width="1" height="9" fill="#333"/><text x="339" y="276.5" font-size="12" fill="#333" text-anchor="end">40</text><text x="1161" y="276.5" font-size="12" fill="#333">400</text><text x="339" y="342.5" font-size="12" fill="#333" text-anchor="end">32</text><text x="1161" y="342.5" font-size="12" fill="#333">320</text><text x="339" y="408.5" font-size="12" fill="#333" text-anchor="end">24</text><text x="1161" y="408.5" font-size="12" fill="#333">240</text><text x="339" y="474.5" font-size="12" fill="#333" text-anchor="end">16</text><text x="1161" y="474.5" font-size="12" fill="#333">160</text><text x="339" y="540.5" font-size="12" fill="#333" text-anchor="end">8</text><text x="1161" y="540.5" font-size="12" fill="#333">80</text><text x="339" y="606.5" font-size="12" fill="#333" text-anchor="end">0</text><text x="1161" y="606.5" font-size="12" fill="#333">0</text><text x="361.5" y="629" font-size="12" font-weight="bold" fill="#333" text-anchor="middle" letter-spacing="0.3">1 Gen</text><text x="487.5" y="629" font-size="12" font-weight="bold" fill="#333" text-anchor="middle" letter-spacing="0.3">1 Mar</text><text x="617.5" y="629" font-size="12" font-weight="bold" fill="#333" text-anchor="middle" letter-spacing="0.3">1 Mag</text><text x="747.5" y="629" font-size="12" font-weight="bold" fill="#333" text-anchor="middle" letter-spacing="0.3">1 Lug</text><text x="880.5" y="629" font-size="12" font-weight="bold" fill="#333" text-anchor="middle" letter-spacing="0.3">1 Set</text><text x="1010.5" y="629" font-size="12" font-weight="bold" fill="#333" text-anchor="middle" letter-spacing="0.3">1 Nov</text><text x="1140.5" y="629" font-size="12" font-weight="bold" fill="#333" text-anchor="middle" letter-spacing="0.3">1 Gen</text><text x="754" y="251.5" font-size="12" font-weight="bold" fill="#333" text-anchor="middle">Temperatura - Irradianza</text><text transform="translate(314.5,437) rotate(-90)" font-size="13" fill="#666" text-anchor="middle">Temperatura [°C]</text><text transform="translate(1192.5,437) rotate(90)" font-size="13" fill="#666" text-anchor="middle">Irradianza [W/m²]</text><rect x="615" y="659" width="17" height="2" fill="#82c4ea"/><circle cx="623.5" cy="660" r="4" fill="#82c4ea"/><text x="636" y="664" font-size="12" fill="#333">Temperatura [°C]</text><rect x="747" y="659" width="17" height="2" fill="#e3bf5c"/><path d="M755.5,655.5l4.5,4.5l-4.5,4.5l-4.5,-4.5z" fill="#e3bf5c"/><text x="768" y="664" font-size="12" fill="#333">Irradianza totale [W/m²]</text><g fill="none" stroke="#2a2a2a" stroke-width="1.5" stroke-linecap="round" stroke-linejoin="round"><path d="M1156,244.500v6.500M1153,248.500l3,3.200l3,-3.200M1150.800,251.500v2.200q0,1.500 1.500,1.500h7.400q1.500,0 1.500,-1.500v-2.200"/></g><g fill="#1a1a1a"><rect x="1181.800" y="245" width="2.400" height="2.400"/><rect x="1189.800" y="245" width="2.400" height="2.400"/><rect x="1181.800" y="252.800" width="2.400" height="2.400"/><rect x="1189.800" y="252.800" width="2.400" height="2.400"/></g><g stroke="#1a1a1a" stroke-width="1.300"><path d="M1183.500,246.700l1.500,1.500M1190.500,246.700l-1.500,1.500M1183.500,253.500l1.500,-1.500M1190.500,253.500l-1.500,-1.500"/></g></svg>
<svg class="abs" width="0" height="0" style="left:0;top:0"><defs>
<radialGradient id="gsun" cx="0.45" cy="0.3" r="0.8"><stop offset="0" stop-color="#fff200"/><stop offset="0.55" stop-color="#ffd800"/><stop offset="1" stop-color="#fb9a00"/></radialGradient>
<linearGradient id="gcloud" x1="0" y1="0" x2="0" y2="1"><stop offset="0" stop-color="#ffffff"/><stop offset="1" stop-color="#a4c2f2"/></linearGradient>
<linearGradient id="gfold" x1="0" y1="0" x2="0" y2="1"><stop offset="0" stop-color="#fbe3a2"/><stop offset="1" stop-color="#eeb95a"/></linearGradient>
<linearGradient id="gfloppy" x1="0" y1="0" x2="1" y2="1"><stop offset="0" stop-color="#5a5ad0"/><stop offset="1" stop-color="#2c2c9c"/></linearGradient>
<linearGradient id="ggear" x1="0" y1="0" x2="0" y2="1"><stop offset="0" stop-color="#49a7e6"/><stop offset="1" stop-color="#1f6fb4"/></linearGradient>
<linearGradient id="genergy" x1="0" y1="0" x2="0" y2="1"><stop offset="0" stop-color="#0a9a3c"/><stop offset="0.4" stop-color="#b8d820"/><stop offset="0.6" stop-color="#ffd400"/><stop offset="0.8" stop-color="#f57a10"/><stop offset="1" stop-color="#e4121c"/></linearGradient>
</defs></svg><svg class="abs" style="left:10px;top:9px" width="16" height="16" viewBox="0 0 16 16"><rect width="16" height="16" fill="#f1f5fa"/>
<path d="M1,1.800h3.200l3.600,8.500v5.400h-6.800z" fill="#1f82cc"/>
<path d="M4.800,1.800h4l0.500,1.100h-4zM5.400,3.500h4.200l0.500,1.100h-4.200zM6.100,5.200h4.200l0.500,1.100h-4.200zM6.800,6.900h4.200l0.500,1.100h-4.200z" fill="#3a94d6"/>
<path d="M8.600,8.800h3.600l0.600,1.300h-4.200zM8.600,10.600h4.500l0.600,1.300h-5.100zM8.600,12.400h5.400l0.600,1.300h-6zM8.600,14.200h6.300l0.500,1.500h-6.800z" fill="#1f82cc"/></svg><svg class="abs" style="left:1195px;top:12px" width="80" height="12" viewBox="0 0 80 12"><g fill="#f6f9fd" stroke="#3c4a66" stroke-width="1">
<rect x="1.500" y="5.500" width="10" height="4" rx="1.200"/>
<path d="M34.500,1.500h9a1,1 0 0 1 1,1v6a1,1 0 0 1 -1,1h-9a1,1 0 0 1 -1,-1v-6a1,1 0 0 1 1,-1z"/>
<rect x="36.500" y="4.500" width="5" height="2.500" fill="#bfd1e9"/>
<path d="M64.500,1.500h2.800l2.200,2.200l2.200,-2.200h2.800v1.300l-2.900,2.900l2.900,2.900v1.300h-2.800l-2.200,-2.200l-2.200,2.200h-2.800v-1.300l2.900,-2.900l-2.900,-2.900z"/>
</g></svg><svg class="abs" style="left:1007px;top:35px" width="16" height="16" viewBox="0 0 16 16"><circle cx="8" cy="8" r="7.100" fill="#fff" stroke="#1a6cba" stroke-width="1.800"/>
<path d="M2.800,8.500c-0.300,-3.300 3.200,-4.300 5.200,-2.600c2,-1.700 5.500,-0.700 5.200,2.600" fill="none" stroke="#1a6cba" stroke-width="1.500"/>
<path d="M8,5.700v5M1.800,10.800h12.400" stroke="#1a6cba" stroke-width="1.600"/><path d="M6.500,1.500l1.500,1l1.500,-1" fill="none" stroke="#1a6cba" stroke-width="0.800"/></svg><svg class="abs" style="left:16px;top:61px" width="18" height="18" viewBox="0 0 18 18"><circle cx="8.900" cy="8.900" r="7.500" fill="#f4f7fc" stroke="#222" stroke-width="1.100"/><path d="M7.300,5.800l3.700,3.100l-3.700,3.100" fill="none" stroke="#222" stroke-width="1.600"/></svg><svg class="abs" style="left:91px;top:62px" width="14" height="16" viewBox="0 0 14 16"><path d="M1.500,1.500h7.500l3.500,3.500v9.500h-11z" fill="#fbfbfc" stroke="#c4c6cc" stroke-width="1"/><path d="M9,1.500v3.500h3.500" fill="#ececf0" stroke="#c4c6cc" stroke-width="0.800"/></svg><svg class="abs" style="left:116px;top:63px" width="17" height="14" viewBox="0 0 17 14"><path d="M1,12.500v-9.500q0,-1 1,-1h3.500l1.500,1.700h5q1,0 1,1v1.800" fill="#f6d486" stroke="#b97f27" stroke-width="1"/>
<path d="M1,12.700l2.800,-6.200h12.200l-3,6.200z" fill="url(#gfold)" stroke="#b97f27" stroke-width="1"/></svg><svg class="abs" style="left:142px;top:62px" width="16" height="16" viewBox="0 0 16 16"><g transform="translate(0.8,0.6) scale(0.93)"><path d="M0.500,0.500h12l1.500,1.500v12h-13.500z" fill="url(#gfloppy)" stroke="#23237c" stroke-width="0.800"/>
<rect x="2.500" y="0.800" width="8.500" height="6.200" fill="#f2f4fa"/><rect x="3.500" y="9" width="7" height="5" fill="#c9cbd6"/><rect x="4.500" y="10" width="2" height="3.200" fill="#30306e"/></g></svg><svg class="abs" style="left:168px;top:62px" width="16" height="16" viewBox="0 0 16 16"><g transform="translate(4,0) scale(0.75)"><path d="M0.500,0.500h12l1.500,1.500v12h-13.500z" fill="url(#gfloppy)" stroke="#23237c" stroke-width="0.800"/>
<rect x="2.500" y="0.800" width="8.500" height="6.200" fill="#f2f4fa"/><rect x="3.500" y="9" width="7" height="5" fill="#c9cbd6"/><rect x="4.500" y="10" width="2" height="3.200" fill="#30306e"/></g><g transform="translate(2,2) scale(0.75)"><path d="M0.500,0.500h12l1.500,1.500v12h-13.500z" fill="url(#gfloppy)" stroke="#23237c" stroke-width="0.800"/>
<rect x="2.500" y="0.800" width="8.500" height="6.200" fill="#f2f4fa"/><rect x="3.500" y="9" width="7" height="5" fill="#c9cbd6"/><rect x="4.500" y="10" width="2" height="3.200" fill="#30306e"/></g><g transform="translate(0,4.5) scale(0.75)"><path d="M0.500,0.500h12l1.500,1.500v12h-13.500z" fill="url(#gfloppy)" stroke="#23237c" stroke-width="0.800"/>
<rect x="2.500" y="0.800" width="8.500" height="6.200" fill="#f2f4fa"/><rect x="3.500" y="9" width="7" height="5" fill="#c9cbd6"/><rect x="4.500" y="10" width="2" height="3.200" fill="#30306e"/></g></svg><svg class="abs" style="left:202px;top:61px" width="18" height="18" viewBox="0 0 18 18"><path d="M6.500,1.500h7l3.500,3.500v11.500h-10.500z" fill="#fff" stroke="#222" stroke-width="1.200"/><path d="M13.500,1.500v3.500h3.500" fill="none" stroke="#222" stroke-width="1"/>
<rect x="0.800" y="3.500" width="10" height="8.500" fill="#dfe6ff" stroke="#1414b4" stroke-width="1.300"/>
<path d="M2.500,5.500l1.500,4.800l1.800,-4l1.800,4l1.500,-4.800" fill="none" stroke="#10108c" stroke-width="1.200"/></svg><svg class="abs" style="left:265px;top:68px" width="7" height="4" viewBox="0 0 7 4"><path d="M0.500,0.300h5.500l-2.750,3.200z" fill="#1e2f55"/></svg><svg class="abs" style="left:288px;top:61px" width="18" height="18" viewBox="0 0 18 18"><path d="M14.64,7.65L17.00,7.73L17.00,10.27L14.64,10.35L13.95,12.03L15.55,13.76L13.76,15.55L12.03,13.95L10.35,14.64L10.27,17.00L7.73,17.00L7.65,14.64L5.97,13.95L4.24,15.55L2.45,13.76L4.05,12.03L3.36,10.35L1.00,10.27L1.00,7.73L3.36,7.65L4.05,5.97L2.45,4.24L4.24,2.45L5.97,4.05L7.65,3.36L7.73,1.00L10.27,1.00L10.35,3.36L12.03,4.05L13.76,2.45L15.55,4.24L13.95,5.97z" fill="url(#ggear)" stroke="#1b5f9c" stroke-width="0.500"/><circle cx="9" cy="9" r="2.700" fill="#eef4fc" stroke="#1b5f9c" stroke-width="0.600"/></svg><svg class="abs" style="left:321px;top:61px" width="18" height="18" viewBox="0 0 18 18"><rect x="1" y="2" width="11.500" height="12" fill="#5b9be0"/><path d="M3,8l3.800,-3.500l3.800,3.500v5h-7.600z" fill="none" stroke="#fff" stroke-width="1"/><path d="M5.500,13v-3h2.500v3" fill="none" stroke="#fff" stroke-width="0.800"/>
<path d="M3.500,3v10M10,3v10" stroke="#d6e6fa" stroke-width="0.500"/>
<rect x="12.500" y="1" width="3.500" height="15" fill="#f3c21c"/><rect x="1" y="13.500" width="15" height="3" fill="#f3c21c"/>
<path d="M13,3h1.500M13,5h2M13,7h1.500M13,9h2M13,11h1.500M3,15v1M5,14.500v1.500M7,15v1M9,14.500v1.500" stroke="#8a6a00" stroke-width="0.600"/>
<circle cx="13.800" cy="14.200" r="2.700" fill="#3a2a20"/><circle cx="13.800" cy="14.200" r="1" fill="#caa"/></svg><svg class="abs" style="left:414px;top:61px" width="18" height="18" viewBox="0 0 18 18"><circle cx="10.800" cy="6.500" r="4.800" fill="#f2f7fd" stroke="#2b7fc4" stroke-width="1.800"/><path d="M7.300,10.200l-5.500,4.300" stroke="#2b7fc4" stroke-width="2.400" stroke-linecap="round"/>
<path d="M6.500,14.800c2.500,2.200 8.500,1.800 10.700,-2.300c-2.500,1.600 -5,2.200 -7.200,1.200l-1.200,-1.500z" fill="#2b7fc4"/></svg><svg class="abs" style="left:524px;top:63px" width="16" height="13" viewBox="0 0 16 13"><rect x="0.600" y="0.600" width="14.600" height="11.800" fill="#fdfdff" stroke="#3c4c96" stroke-width="1.200"/><text x="7.900" y="9.600" font-family="Liberation Sans, sans-serif" font-size="9" font-weight="bold" fill="#1b2555" text-anchor="middle">ab</text></svg><svg class="abs" style="left:220px;top:96px" width="7" height="9" viewBox="0 0 7 9"><path d="M5.500,1l-3.800,3.500l3.800,3.500" fill="none" stroke="#3c4a66" stroke-width="1.700"/></svg><svg class="abs" style="left:11px;top:127px" width="20" height="18" viewBox="0 0 20 18"><rect x="0.500" y="2.500" width="19" height="14" fill="#f6f6f6" stroke="#bdbdbd"/><rect x="1.500" y="1" width="3" height="2.500" fill="#d8d8d8"/><rect x="15.500" y="1" width="3" height="2.500" fill="#d8d8d8"/>
<path d="M3,17v-9l3.500,-4l3.500,4v9z" fill="#2f7de0"/><path d="M6.500,4l-1,-2.500" stroke="#e02020" stroke-width="1.200"/><rect x="9.500" y="9.500" width="6" height="7.500" fill="#4a92ea"/>
<path d="M4.500,9h1M7,9h1M4.500,11.500h1M7,11.500h1M4.500,14h1M7,14h1M11,11.500h1M13,11.500h1M11,14h1M13,14h1" stroke="#d6e8ff" stroke-width="1.200"/></svg><svg class="abs" style="left:10px;top:166px" width="21" height="20" viewBox="0 0 21 20"><circle cx="6.500" cy="6" r="4" fill="#f0b890"/><path d="M2.300,5.500c0,-4 8,-5 8.600,-0.500c-2,-1.800 -6,-1.500 -8.600,0.500z" fill="#6a3a1a"/>
<path d="M0.500,17.500c0,-5 3,-7 6,-7c3,0 6,2 6,7z" fill="#4a46b8"/><path d="M5,10.800l1.500,2.500l1.500,-2.500z" fill="#fff"/>
<circle cx="14.500" cy="9" r="3.800" fill="#f4c09a"/><path d="M10.400,8.500c0,-4 8,-4.500 8.400,0c-2,-1.700 -6,-1.500 -8.400,0z" fill="#a0401a"/>
<path d="M8.500,19.500c0,-4.500 3,-6.500 6,-6.500c3,0 6,2 6,6.500z" fill="#d42a2a"/><path d="M13,13.300l1.500,2.300l1.500,-2.300z" fill="#fff"/></svg><svg class="abs" style="left:11px;top:206px" width="20" height="19" viewBox="0 0 20 19"><path d="M1.500,0.800h8l4,4v13h-12z" fill="#fff" stroke="#1414d2" stroke-width="1.400"/><path d="M9.500,0.800v4h4" fill="none" stroke="#1414d2" stroke-width="1.200"/>
<path d="M3.800,6h5M3.800,8.500h7.500M3.800,11h7.500M3.800,13.500h7.500M3.800,15.800h5" stroke="#1414d2" stroke-width="1.100"/><path d="M9.500,18.200l4.500,-7l5.500,7z" fill="url(#genergy)"/><path d="M9.500,18.200h10" stroke="#e4121c" stroke-width="1.200"/></svg><svg class="abs" style="left:11px;top:247px" width="20.0" height="18.0" viewBox="0 0 20 18"><g>
<path d="M16.53,7.82L19.60,8.70L16.53,9.58zM16.53,9.58L19.18,11.36L15.99,11.24zM15.99,11.24L17.96,13.75L14.96,12.66zM14.96,12.66L16.05,15.66L13.54,13.69zM13.54,13.69L13.66,16.88L11.88,14.23zM11.88,14.23L11.00,17.30L10.12,14.23zM10.12,14.23L8.34,16.88L8.46,13.69zM8.46,13.69L5.95,15.66L7.04,12.66zM7.04,12.66L4.04,13.75L6.01,11.24zM6.01,11.24L2.82,11.36L5.47,9.58zM5.47,9.58L2.40,8.70L5.47,7.82zM5.47,7.82L2.82,6.04L6.01,6.16zM6.01,6.16L4.04,3.65L7.04,4.74zM7.04,4.74L5.95,1.74L8.46,3.71zM8.46,3.71L8.34,0.52L10.12,3.17zM10.12,3.17L11.00,0.10L11.88,3.17zM11.88,3.17L13.66,0.52L13.54,3.71zM13.54,3.71L16.05,1.74L14.96,4.74zM14.96,4.74L17.96,3.65L15.99,6.16zM15.99,6.16L19.18,6.04L16.53,7.82z" fill="#ee4a1a"/>
<circle cx="11.0" cy="8.7" r="6" fill="url(#gsun)" stroke="#f79a10" stroke-width="0.500"/>
<path d="M3.400,17.600c-2,0 -3.300,-1.100 -3.300,-2.500c0,-1.400 1.300,-2.400 2.800,-2.300c0.200,-1.700 1.600,-2.900 3.300,-2.900c0.700,0 1.300,0.200 1.800,0.500c0.700,-1 1.800,-1.600 3,-1.600c1.800,0 3.300,1.300 3.600,3c0.400,-0.200 0.800,-0.300 1.300,-0.300c1.700,0 3.100,1.300 3.100,2.900c0,1.700 -1.400,3.200 -3.300,3.200z" fill="url(#gcloud)" stroke="#5f8ee4" stroke-width="0.800"/>
<path d="M3.500,15.600c0.800,-1.700 2.600,-1.700 3.300,-0.300c0.800,-2 3.300,-2 4,0c0.600,-1.200 2.200,-1.200 2.900,0" fill="none" stroke="#5c8fe6" stroke-width="1"/>
<path d="M6.500,12.500c0.600,-0.900 1.600,-0.900 2.200,0M11.500,12c0.600,-0.900 1.700,-0.900 2.300,0" fill="none" stroke="#8fb4ee" stroke-width="0.800"/>
</g></svg><svg class="abs" style="left:11px;top:286px" width="20" height="19" viewBox="0 0 20 19"><path d="M1.500,0.800h8l4,4v13h-12z" fill="#fff" stroke="#1414d2" stroke-width="1.400"/><path d="M9.500,0.800v4h4" fill="none" stroke="#1414d2" stroke-width="1.200"/>
<path d="M3.800,6h5M3.800,8.500h7.500M3.800,11h7.500M3.800,13.500h7.500M3.800,15.800h5" stroke="#1414d2" stroke-width="1.100"/><rect x="10.500" y="10.500" width="8" height="6" fill="#6aa6ec"/><rect x="10" y="16" width="9.500" height="2.500" fill="#f3c21c"/><path d="M12.500,15.500v-2.500l2,-1.500l2,1.500v2.500" fill="none" stroke="#fff" stroke-width="0.800"/><path d="M11.500,17v1M13.500,17v1M15.500,17v1M17.500,17v1" stroke="#7a5a00" stroke-width="0.700"/></svg><svg class="abs" style="left:10px;top:326px" width="22" height="20" viewBox="0 0 22 20"><path d="M13.40,6.20L15.38,4.22M9.30,4.50L9.30,1.70M5.20,6.20L3.22,4.22M3.50,10.30L0.70,10.30M5.20,14.40L3.22,16.38M9.30,16.10L9.30,18.90M13.40,14.40L15.38,16.38M18.500,10.300h2.500" stroke="#d89a48" stroke-width="1"/><circle cx="9.300" cy="10.300" r="4.700" fill="url(#gsun)" stroke="#f5a800" stroke-width="0.500"/>
<path d="M13.900,2.800a1.500,1.500 0 0 1 3,0v11.500a2.500,2.500 0 1 1 -3,0z" fill="#c81018" stroke="#98080e" stroke-width="0.600"/><path d="M15.400,3.500v11" stroke="#f06a6a" stroke-width="0.800"/></svg><svg class="abs" style="left:12px;top:367px" width="18" height="18" viewBox="0 0 18 18"><path d="M9,8.8L9.00,0.80M9,8.8L2.07,4.80M9,8.8L2.07,12.80M9,8.8L9.00,16.80M9,8.8L15.93,12.80M9,8.8L15.93,4.80" stroke="#1f5fd6" stroke-width="1.500" stroke-linecap="round" fill="none"/><path d="M9.00,5.20L6.87,3.71M9.00,5.20L11.13,3.71M9.00,3.04L7.36,1.89M9.00,3.04L10.64,1.89M5.88,7.00L3.53,8.10M5.88,7.00L5.66,4.41M4.01,5.92L2.20,6.77M4.01,5.92L3.84,3.93M5.88,10.60L5.66,13.19M5.88,10.60L3.53,9.50M4.01,11.68L3.84,13.67M4.01,11.68L2.20,10.83M9.00,12.40L11.13,13.89M9.00,12.40L6.87,13.89M9.00,14.56L10.64,15.71M9.00,14.56L7.36,15.71M12.12,10.60L14.47,9.50M12.12,10.60L12.34,13.19M13.99,11.68L15.80,10.83M13.99,11.68L14.16,13.67M12.12,7.00L12.34,4.41M12.12,7.00L14.47,8.10M13.99,5.92L14.16,3.93M13.99,5.92L15.80,6.77" stroke="#2a62d2" stroke-width="1" fill="none"/>
<path d="M9,0.300v1.500M9,15.800v1.500" stroke="#b8bcc8" stroke-width="1.500"/><circle cx="9" cy="8.800" r="2.500" fill="#2a9ae8"/><circle cx="9" cy="8.800" r="1" fill="#1f5fd6"/></svg><svg class="abs" style="left:18px;top:512px" width="18" height="17" viewBox="0 0 18 17"><path d="M1,8.200l8,-7l8,7" fill="none" stroke="#2a4a8a" stroke-width="1.300"/><path d="M3,8v8h12v-8l-6,-5.300z" fill="#f6f8fb" stroke="#8a96a8" stroke-width="0.800"/>
<path d="M1.500,7.500l2.500,-2.200v-3.500h2.200v1.600" fill="#2f7de0" stroke="#1a4fb0" stroke-width="0.600"/><rect x="4.800" y="9" width="3" height="3" fill="#2f7de0"/><rect x="9.500" y="10" width="3.200" height="6" fill="#1a3f9a"/></svg><svg class="abs" style="left:18px;top:544px" width="18" height="18" viewBox="0 0 18 18"><path d="M9.800,1.200h2.800l3.600,4.500v12h-6.400z" fill="#c4c4cc"/><path d="M12.300,3v14.700" stroke="#e6e6ea" stroke-width="1.600"/><path d="M9,1.200h1.400v16.500h-1.400z" fill="#5a5a68"/>
<path d="M0.800,9l7.400,-7.800v16.500h-5.200v-6.200z" fill="#2f6fe8"/></svg><svg class="abs" style="left:18px;top:576px" width="18" height="18" viewBox="0 0 18 18"><rect x="2.500" y="2" width="8" height="12.500" fill="#3a8ae0"/><path d="M4,4.500h2M7,4.500h2M4,7.500h2M7,7.500h2M4,10.500h2M7,10.500h2" stroke="#e4f0ff" stroke-width="1.600"/>
<rect x="1" y="15" width="13" height="2" fill="#3a9a5a"/><rect x="6" y="13" width="3" height="2.500" fill="#2f9a6a"/>
<circle cx="13" cy="5" r="3" fill="none" stroke="#6a7a8a" stroke-width="1.200"/><path d="M13,0.500v2M13,7.500v2M8.800,5h1.700M15.500,5h2M10,2l1.300,1.300M16,2l-1.300,1.300M16,8l-1.300,-1.300" stroke="#6a7a8a" stroke-width="1"/></svg><svg class="abs" style="left:19px;top:609px" width="20" height="19" viewBox="0 0 20 19"><path d="M1.500,1h8.500l8.800,16.800h-18.300z" fill="url(#genergy)"/><path d="M0.500,3.600h13M0.500,6h14M0.500,8.400h15M0.500,10.800h16.500M0.500,13.200h18M0.500,15.600h19" stroke="#d0ddef" stroke-width="0.500" opacity="0.700"/><path d="M0.500,18h18.800" stroke="#e4121c" stroke-width="1.200"/></svg><svg class="abs" style="left:18px;top:644px" width="18" height="18" viewBox="0 0 18 18"><g transform="translate(1.200,0.800) scale(0.880)"><rect x="4.500" y="1" width="9" height="6" fill="#fff" stroke="#7a7a84" stroke-width="0.900"/><rect x="1" y="6" width="16" height="7.500" rx="1.200" fill="#b4b6c0" stroke="#5a5c68" stroke-width="0.900"/><rect x="1.500" y="9" width="15" height="2" fill="#6a6c78"/>
<rect x="4.500" y="11.500" width="9" height="5.500" fill="#fff" stroke="#5a5c68" stroke-width="0.900"/><rect x="7.500" y="13" width="3" height="2" fill="#2f7de0"/></g></svg><svg class="abs" style="left:18px;top:677px" width="18" height="17" viewBox="0 0 18 17"><g transform="translate(1.200,1) scale(0.880)"><path d="M3.500,0.800h8l3,2.500v4h-11z" fill="#f8f8f4" stroke="#b0b0a8" stroke-width="0.700"/><path d="M5.500,1v5M7.500,1v5M9.500,1v5" stroke="#b8b8b0" stroke-width="0.800"/>
<rect x="1" y="6.500" width="16" height="10" rx="1" fill="#f3cf7a" stroke="#c89a3a" stroke-width="0.900"/><path d="M1.500,9.500h15" stroke="#d8aa4a" stroke-width="0.800"/><rect x="7" y="11.500" width="4" height="1.600" fill="#8a6a2a"/></g></svg><svg class="abs" style="left:260px;top:90px" width="20.0" height="18.0" viewBox="0 0 20 18"><g>
<path d="M16.53,7.82L19.60,8.70L16.53,9.58zM16.53,9.58L19.18,11.36L15.99,11.24zM15.99,11.24L17.96,13.75L14.96,12.66zM14.96,12.66L16.05,15.66L13.54,13.69zM13.54,13.69L13.66,16.88L11.88,14.23zM11.88,14.23L11.00,17.30L10.12,14.23zM10.12,14.23L8.34,16.88L8.46,13.69zM8.46,13.69L5.95,15.66L7.04,12.66zM7.04,12.66L4.04,13.75L6.01,11.24zM6.01,11.24L2.82,11.36L5.47,9.58zM5.47,9.58L2.40,8.70L5.47,7.82zM5.47,7.82L2.82,6.04L6.01,6.16zM6.01,6.16L4.04,3.65L7.04,4.74zM7.04,4.74L5.95,1.74L8.46,3.71zM8.46,3.71L8.34,0.52L10.12,3.17zM10.12,3.17L11.00,0.10L11.88,3.17zM11.88,3.17L13.66,0.52L13.54,3.71zM13.54,3.71L16.05,1.74L14.96,4.74zM14.96,4.74L17.96,3.65L15.99,6.16zM15.99,6.16L19.18,6.04L16.53,7.82z" fill="#ee4a1a"/>
<circle cx="11.0" cy="8.7" r="6" fill="url(#gsun)" stroke="#f79a10" stroke-width="0.500"/>
<path d="M3.400,17.600c-2,0 -3.300,-1.100 -3.300,-2.500c0,-1.400 1.300,-2.400 2.800,-2.300c0.200,-1.700 1.600,-2.900 3.300,-2.900c0.700,0 1.300,0.200 1.800,0.500c0.700,-1 1.800,-1.600 3,-1.600c1.800,0 3.300,1.300 3.600,3c0.400,-0.200 0.800,-0.300 1.300,-0.300c1.700,0 3.100,1.300 3.100,2.900c0,1.700 -1.400,3.200 -3.300,3.200z" fill="url(#gcloud)" stroke="#5f8ee4" stroke-width="0.800"/>
<path d="M3.500,15.600c0.800,-1.700 2.600,-1.700 3.300,-0.300c0.800,-2 3.300,-2 4,0c0.600,-1.200 2.200,-1.200 2.900,0" fill="none" stroke="#5c8fe6" stroke-width="1"/>
<path d="M6.500,12.500c0.600,-0.900 1.600,-0.900 2.200,0M11.500,12c0.600,-0.900 1.700,-0.900 2.300,0" fill="none" stroke="#8fb4ee" stroke-width="0.800"/>
</g></svg><svg class="abs" style="left:272.5px;top:132px" width="19.0" height="17.099999999999998" viewBox="0 0 20 18"><g>
<path d="M16.53,7.82L19.60,8.70L16.53,9.58zM16.53,9.58L19.18,11.36L15.99,11.24zM15.99,11.24L17.96,13.75L14.96,12.66zM14.96,12.66L16.05,15.66L13.54,13.69zM13.54,13.69L13.66,16.88L11.88,14.23zM11.88,14.23L11.00,17.30L10.12,14.23zM10.12,14.23L8.34,16.88L8.46,13.69zM8.46,13.69L5.95,15.66L7.04,12.66zM7.04,12.66L4.04,13.75L6.01,11.24zM6.01,11.24L2.82,11.36L5.47,9.58zM5.47,9.58L2.40,8.70L5.47,7.82zM5.47,7.82L2.82,6.04L6.01,6.16zM6.01,6.16L4.04,3.65L7.04,4.74zM7.04,4.74L5.95,1.74L8.46,3.71zM8.46,3.71L8.34,0.52L10.12,3.17zM10.12,3.17L11.00,0.10L11.88,3.17zM11.88,3.17L13.66,0.52L13.54,3.71zM13.54,3.71L16.05,1.74L14.96,4.74zM14.96,4.74L17.96,3.65L15.99,6.16zM15.99,6.16L19.18,6.04L16.53,7.82z" fill="#ee4a1a"/>
<circle cx="11.0" cy="8.7" r="6" fill="url(#gsun)" stroke="#f79a10" stroke-width="0.500"/>
<path d="M3.400,17.600c-2,0 -3.300,-1.100 -3.300,-2.500c0,-1.400 1.300,-2.400 2.800,-2.300c0.200,-1.700 1.600,-2.900 3.300,-2.900c0.700,0 1.300,0.200 1.800,0.500c0.700,-1 1.800,-1.600 3,-1.600c1.800,0 3.300,1.300 3.600,3c0.400,-0.200 0.800,-0.300 1.300,-0.300c1.700,0 3.100,1.300 3.100,2.900c0,1.700 -1.400,3.200 -3.300,3.200z" fill="url(#gcloud)" stroke="#5f8ee4" stroke-width="0.800"/>
<path d="M3.500,15.600c0.800,-1.700 2.600,-1.700 3.300,-0.300c0.800,-2 3.300,-2 4,0c0.600,-1.200 2.200,-1.200 2.900,0" fill="none" stroke="#5c8fe6" stroke-width="1"/>
<path d="M6.500,12.500c0.600,-0.900 1.600,-0.900 2.200,0M11.500,12c0.600,-0.900 1.700,-0.900 2.300,0" fill="none" stroke="#8fb4ee" stroke-width="0.800"/>
</g></svg><svg class="abs" style="left:369px;top:132px" width="16" height="15" viewBox="0 0 16 15"><rect x="0.500" y="0.500" width="15" height="14" fill="#fff" stroke="#7a8aa8" stroke-width="1"/><rect x="0.500" y="0.500" width="15" height="3" fill="#4a8ad8"/>
<path d="M0.500,7h15M0.500,10.500h15M4.200,3.500v11M8,3.500v11M11.800,3.500v11" stroke="#a8bcd8" stroke-width="0.800"/><rect x="7.800" y="4.800" width="4.800" height="3.800" fill="#fff" stroke="#b81414" stroke-width="1.200"/></svg><svg class="abs" style="left:290px;top:174px" width="8" height="16" viewBox="0 0 8 16"><path d="M2.600,2a1.400,1.400 0 0 1 2.800,0v8.300a2.800,2.800 0 1 1 -2.800,0z" fill="#fbfbfb" stroke="#8a8a92" stroke-width="0.900"/><circle cx="4" cy="12.600" r="1.800" fill="#d81c1c"/><path d="M4,5v7" stroke="#d81c1c" stroke-width="1.200"/></svg><svg class="abs" style="left:406px;top:173px" width="16" height="16" viewBox="0 0 16 16"><g fill="#fbe2b0" stroke="#d8841c" stroke-width="1"><rect x="0.700" y="10.500" width="2.300" height="4.500" rx="0.800"/><rect x="4.700" y="7.500" width="2.300" height="7.500" rx="0.800"/><rect x="8.700" y="6" width="2.300" height="9" rx="0.800"/><rect x="12.700" y="8" width="2.300" height="7" rx="0.800"/></g>
<path d="M1.800,6.800l4,-3.500l4,-1.500l4,3" fill="none" stroke="#5a6a7a" stroke-width="0.800" stroke-dasharray="1.500,1"/>
<g fill="#fff" stroke="#4a5a6a" stroke-width="0.800"><circle cx="1.800" cy="6.800" r="1.100"/><circle cx="5.800" cy="3.300" r="1.100"/><circle cx="9.800" cy="1.800" r="1.100"/><circle cx="13.800" cy="4.800" r="1.100"/></g></svg><svg class="abs" style="left:628px;top:207px" width="17" height="16" viewBox="0 0 17 16"><rect x="1" y="1.500" width="12.500" height="11.500" fill="#fff" stroke="#c04a4a" stroke-width="0.900"/><rect x="1" y="1.500" width="12.500" height="2.300" fill="#d04a4a"/>
<path d="M1,6.500h12M1,9.300h8M4.200,4v9M7.300,4v9M10.400,4v5" stroke="#cc7070" stroke-width="0.800"/><circle cx="11.500" cy="11.500" r="3.400" fill="#fff" stroke="#a81c1c" stroke-width="1.200"/><path d="M11.500,9.800v1.900h1.600" fill="none" stroke="#a81c1c" stroke-width="0.900"/></svg><svg class="abs" style="left:1252px;top:118px" width="20" height="18" viewBox="0 0 20 18"><rect x="2" y="2.300" width="16" height="4.600" rx="1" fill="#dfe9f8" stroke="#2f58ac" stroke-width="1.100"/><path d="M2,9.500v6.500M18,9.500v6.500M3,12.800h14" stroke="#222" stroke-width="1.200"/><path d="M2.500,12.800l3,-1.800v3.600zM17.500,12.800l-3,-1.800v3.600z" fill="#222"/></svg>
<div class="t" id="t0" style="left:29.6px;top:12.7px;font-size:11px;color:#1b2f5e;letter-spacing:-0.251px">Blumatica Energy</div><div class="t" id="t1" style="left:114.6px;top:12.9px;font-size:11px;color:#4a5f85;letter-spacing:-0.872px">·</div><div class="t" id="t2" style="left:15.4px;top:36.8px;font-size:12px;color:#1e2f55;letter-spacing:-0.286px">File</div><div class="t" id="t3" style="left:46.3px;top:36.8px;font-size:12px;color:#1e2f55;letter-spacing:-0.060px">Funzionalità</div><div class="t" id="t4" style="left:123.4px;top:36.8px;font-size:12px;color:#1e2f55;letter-spacing:0.105px">Strumenti</div><div class="t" id="t5" style="left:188.3px;top:36.8px;font-size:12px;color:#1e2f55;letter-spacing:0.108px">Filmati</div><div class="t" id="t6" style="left:235.8px;top:36.8px;font-size:12px;color:#1e2f55;letter-spacing:0.112px">?</div><div class="t" id="t7" style="left:1027.0px;top:36.8px;font-size:12px;color:#1e2f55;letter-spacing:-0.119px">Blumatica Energy - ver. 6.2.11.1 - Blumatica srl</div><div class="t" id="t8" style="left:37.3px;top:63.3px;font-size:13px;color:#1a1a1a;letter-spacing:0.246px"><b style="color:#2a6fb5">b</b>Start</div><div class="t" id="t9" style="left:223.0px;top:64.1px;font-size:12px;color:#1e2f55;letter-spacing:-0.093px">Stampe</div><div class="t" id="t10" style="left:342.3px;top:64.1px;font-size:12px;color:#1e2f55;letter-spacing:-0.320px">CAD Energy</div><div class="t" id="t11" style="left:435.4px;top:64.1px;font-size:12px;color:#1e2f55;letter-spacing:-0.158px">Analizza lavoro</div><div class="t" id="t12" style="left:544.3px;top:64.1px;font-size:12px;color:#1e2f55;letter-spacing:0.091px">Archivio testi</div><div class="t" id="t13" style="left:18.0px;top:94.8px;font-size:12px;color:#1e395b;font-weight:bold;letter-spacing:0.082px">Dati generali</div><div class="t" id="t14" style="left:35.6px;top:130.7px;font-size:11px;color:#0a0a0a;letter-spacing:-0.155px">Informazioni Generali</div><div class="t" id="t15" style="left:35.6px;top:170.7px;font-size:11px;color:#0a0a0a;letter-spacing:0.003px">Soggetti</div><div class="t" id="t16" style="left:35.6px;top:210.7px;font-size:11px;color:#0a0a0a;letter-spacing:-0.083px">Dati per Certificazione</div><div class="t" id="t17" style="left:35.6px;top:250.7px;font-size:11px;color:#0a0a0a;letter-spacing:-0.285px">Dati Climatici</div><div class="t" id="t18" style="left:35.6px;top:290.7px;font-size:11px;color:#0a0a0a;letter-spacing:-0.190px">Dati per Relazione Legge 10</div><div class="t" id="t19" style="left:35.6px;top:330.7px;font-size:11px;color:#0a0a0a;letter-spacing:-0.150px">Carichi termici estivi</div><div class="t" id="t20" style="left:35.6px;top:370.7px;font-size:11px;color:#0a0a0a;letter-spacing:-0.131px">Potenza termica invernale</div><div class="t" id="t21" style="left:41.0px;top:515.0px;font-size:12px;color:#1e395b;font-weight:bold;letter-spacing:0.082px">Dati generali</div><div class="t" id="t22" style="left:41.0px;top:547.0px;font-size:12px;color:#1e395b;font-weight:bold;letter-spacing:0.056px">Dati Involucro</div><div class="t" id="t23" style="left:41.0px;top:579.0px;font-size:12px;color:#1e395b;font-weight:bold;letter-spacing:0.230px">Dati Impianti</div><div class="t" id="t24" style="left:45.4px;top:613.0px;font-size:12px;color:#1e395b;font-weight:bold;letter-spacing:-0.108px">Status Energetico</div><div class="t" id="t25" style="left:41.0px;top:647.0px;font-size:12px;color:#1e395b;font-weight:bold;letter-spacing:0.240px">Stampe</div><div class="t" id="t26" style="left:41.0px;top:679.0px;font-size:12px;color:#1e395b;font-weight:bold;letter-spacing:-0.172px">Archivi di base</div><div class="t" id="t27" style="left:285.8px;top:91.8px;font-size:16px;color:#1e395b;font-weight:bold;letter-spacing:0.589px">Dati Climatici</div><div class="t" id="t28" style="left:294.9px;top:135.7px;font-size:11px;color:#1c1c2c;letter-spacing:-0.260px">Dati climatici</div><div class="t" id="t29" style="left:387.4px;top:135.0px;font-size:11px;color:#111;letter-spacing:-0.242px">Dinamico orario</div><div class="t" id="t30" style="left:304.8px;top:176.7px;font-size:11px;color:#1c1c2c;letter-spacing:-0.256px">Parametri climatici</div><div class="t" id="t31" style="left:424.7px;top:175.7px;font-size:11px;color:#111;letter-spacing:-0.240px">Grafici</div><div class="t" id="t32" style="left:285.8px;top:209.7px;font-size:11px;color:#111;letter-spacing:-0.095px">Seleziona i dati da plottare</div><div class="t" id="t33" style="left:459.2px;top:209.7px;font-size:11px;color:#111;letter-spacing:-0.114px">Periodo ( Dal - Al )</div><div class="t" id="t34" style="left:552.6px;top:209.7px;font-size:11px;color:#111;letter-spacing:0.174px">01/01 - 12/31</div><div class="t" id="t35" style="left:695.0px;top:209.7px;font-size:11px;color:#111;letter-spacing:-0.305px">Visualizza valori minimi e massimi giornalieri</div>
</body>
</html>
